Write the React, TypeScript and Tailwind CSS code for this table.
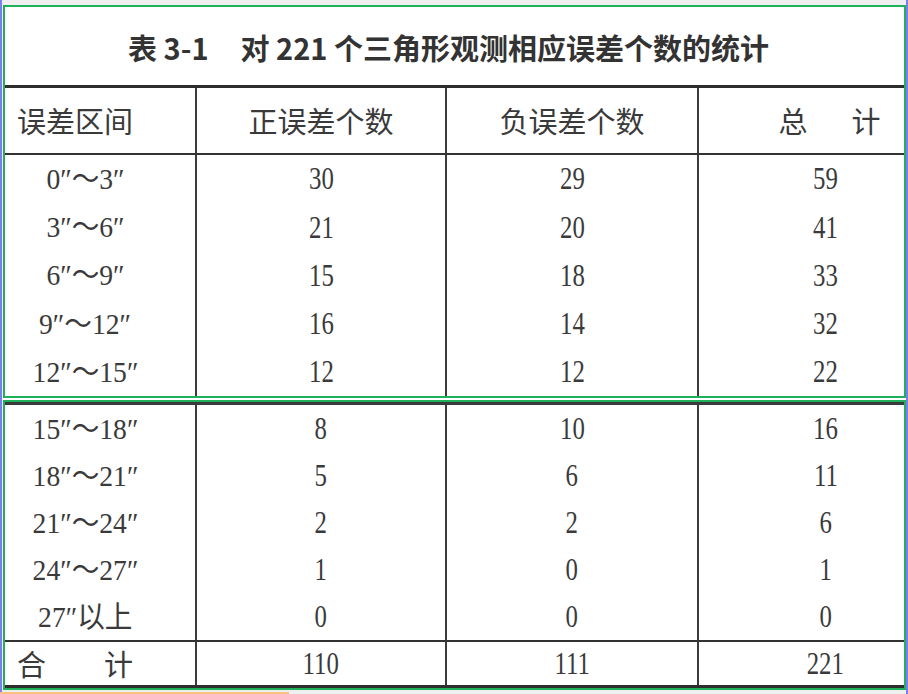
const serif = "font-['Liberation_Serif','DejaVu_Serif','Noto_Sans_CJK_SC',serif]";
const cjk = "font-['Noto_Sans_CJK_SC','Liberation_Serif',sans-serif]";

type Row = [string, string, string, string];

const top: Row[] = [
  ["0″～3″", "30", "29", "59"],
  ["3″～6″", "21", "20", "41"],
  ["6″～9″", "15", "18", "33"],
  ["9″～12″", "16", "14", "32"],
  ["12″～15″", "12", "12", "22"],
];

const bottom: Row[] = [
  ["15″～18″", "8", "10", "16"],
  ["18″～21″", "5", "6", "11"],
  ["21″～24″", "2", "2", "6"],
  ["24″～27″", "1", "0", "1"],
  ["27″以上", "0", "0", "0"],
];

function Num({ v }: { v: string }) {
  return <span className="inline-block scale-x-[0.8] text-[31px] leading-none">{v}</span>;
}

function DataRow({ row, h }: { row: Row; h: string }) {
  return (
    <div className={`grid grid-cols-[192px_250px_252px_1fr] ${h} text-[#3a3a3a] ${serif}`}>
      <div className="flex items-center justify-center pr-[30px] border-r-2 border-[#3b3b3b]">
        <span className="inline-block scale-x-[0.92] text-[30px] leading-none">{row[0]}</span>
      </div>
      <div className="flex items-center justify-center border-r-2 border-[#3b3b3b]"><Num v={row[1]} /></div>
      <div className="flex items-center justify-center border-r-2 border-[#3b3b3b]"><Num v={row[2]} /></div>
      <div className="flex items-center justify-center pl-[48px]"><Num v={row[3]} /></div>
    </div>
  );
}

export default function App() {
  return (
    <div className="w-[908px] h-[694px] bg-[#efefef] flex overflow-hidden">
      <div className="w-[2px] h-full bg-[#7d7df0]" />
      <div className="flex-1 flex flex-col pt-[5px] pl-[1px]">
        {/* upper scan */}
        <div className="h-[393px] border-2 border-[#1fb05a] bg-white flex flex-col">
          <div className={`h-[79px] flex items-center justify-center pr-[12px] pt-[3px] text-[29px] font-bold text-[#333] ${cjk}`}>
            <span>表 3-1</span>
            <span className="ml-[32px]">对 221 个三角形观测相应误差个数的统计</span>
          </div>
          <div className="h-[3px] bg-[#2e2e2e]" />
          <div className={`grid grid-cols-[192px_250px_252px_1fr] h-[66px] text-[29px] text-[#3a3a3a] ${cjk}`}>
            <div className="flex items-center pl-[12px] border-r-2 border-[#3b3b3b]">误差区间</div>
            <div className="flex items-center justify-center border-r-2 border-[#3b3b3b]">正误差个数</div>
            <div className="flex items-center justify-center border-r-2 border-[#3b3b3b]">负误差个数</div>
            <div className="flex items-center justify-center gap-[44px] pl-[56px]">
              <span>总</span>
              <span>计</span>
            </div>
          </div>
          <div className="h-[2px] bg-[#333]" />
          {top.map((r) => (
            <DataRow key={r[0]} row={r} h="h-[49px]" />
          ))}
        </div>
        <div className="h-[2px] bg-white" />
        {/* lower scan */}
        <div className="h-[290px] border-2 border-[#1fb05a] bg-white flex flex-col">
          <div className="h-[3px] bg-[#3a3a3a]" />
          {bottom.map((r, i) => (
            <DataRow key={r[0]} row={r} h={i === 4 ? "h-[47px]" : "h-[48px]"} />
          ))}
          <div className="h-[2px] bg-[#333]" />
          <div className={`grid grid-cols-[192px_250px_252px_1fr] flex-1 text-[#3a3a3a] ${serif}`}>
            <div className={`flex items-center pl-[12px] border-r-2 border-[#3b3b3b] text-[29px] ${cjk}`}>合　　计</div>
            <div className="flex items-center justify-center border-r-2 border-[#3b3b3b]"><Num v="110" /></div>
            <div className="flex items-center justify-center border-r-2 border-[#3b3b3b]"><Num v="111" /></div>
            <div className="flex items-center justify-center pl-[48px]"><Num v="221" /></div>
          </div>
          <div className="h-[3px] bg-[#2e2e2e]" />
        </div>
        <div className="h-[2px] w-[289px] -ml-[3px] mt-auto bg-[#f7c27e]" />
      </div>
      <div className="w-[2px] h-full bg-[#7d7df0]" />
    </div>
  );
}
